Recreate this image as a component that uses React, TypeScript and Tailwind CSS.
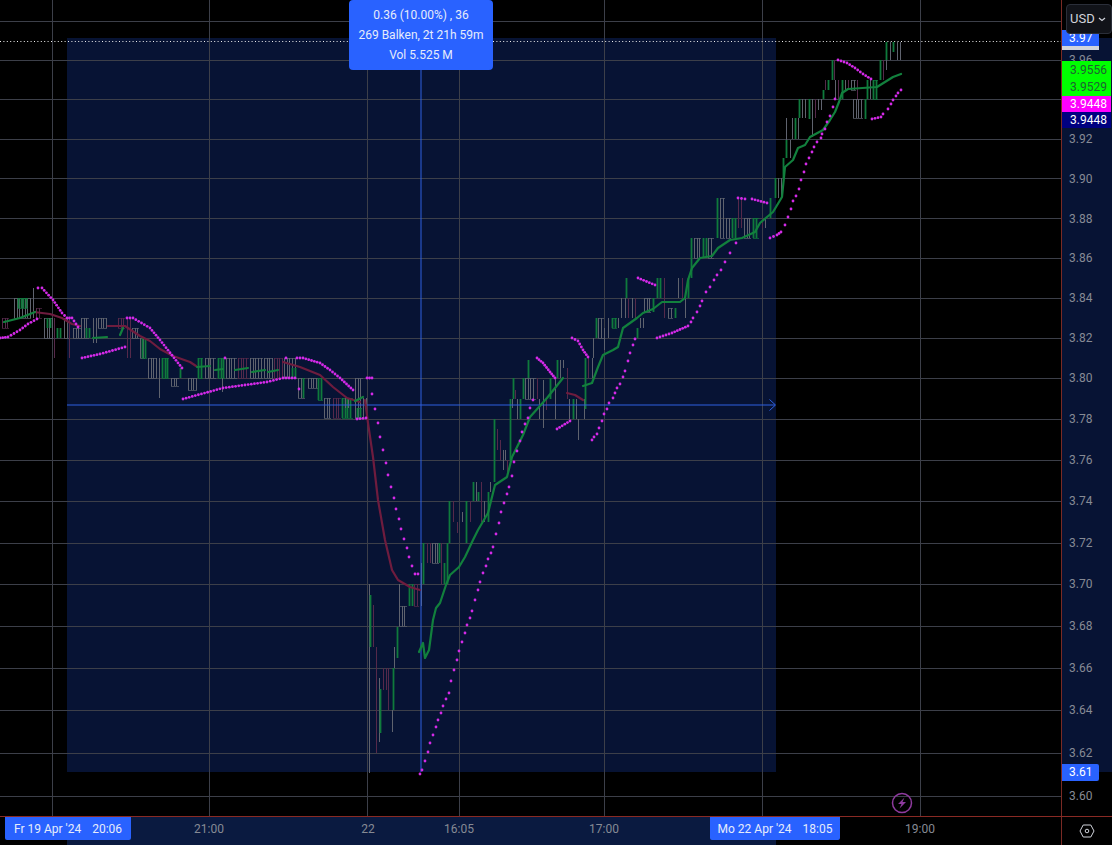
import { Fragment } from 'react';

type Pt = [number, number];
// x1, x2, top, bottom, colour (0 gray, 1 green, 2 red)
type Bar = [number, number, number, number, number];

const BAR_COLORS = ['#5f636e', '#0f7a3c', '#55294a'];

const hLines = [21, 60, 99, 139, 178, 218, 258, 298, 338, 378, 419, 460, 501, 543, 584, 626, 668, 710, 753, 796];
const vLines = [52, 209, 367, 459, 604, 762, 920];

const ticks = [
  { label: '3.96', y: 60 },
  { label: '3.92', y: 139 },
  { label: '3.90', y: 179 },
  { label: '3.88', y: 219 },
  { label: '3.86', y: 258 },
  { label: '3.84', y: 298 },
  { label: '3.82', y: 338 },
  { label: '3.80', y: 378 },
  { label: '3.78', y: 419 },
  { label: '3.76', y: 460 },
  { label: '3.74', y: 501 },
  { label: '3.72', y: 543 },
  { label: '3.70', y: 584 },
  { label: '3.68', y: 626 },
  { label: '3.66', y: 668 },
  { label: '3.64', y: 710 },
  { label: '3.62', y: 753 },
  { label: '3.60', y: 796 },
];

const timeTicks = [
  { label: '21:00', x: 209 },
  { label: '22', x: 368 },
  { label: '16:05', x: 459 },
  { label: '17:00', x: 604 },
  { label: '19:00', x: 920 },
];

const bars: Bar[] = [
  [2, 8, 318, 328, 2], [14, 30, 298, 318, 0], [18, 27, 298, 308, 1], [33, 33, 288, 318, 0], [36, 41, 308, 318, 2],
  [44, 52, 318, 338, 0], [47, 50, 318, 328, 1], [54, 55, 318, 358, 2], [57, 60, 328, 338, 1], [64, 68, 318, 338, 0],
  [69, 70, 318, 358, 2], [73, 80, 328, 338, 0], [81, 88, 318, 338, 0], [86, 89, 328, 338, 1], [93, 96, 318, 343, 0],
  [98, 106, 318, 328, 0], [118, 124, 318, 328, 2], [127, 130, 318, 358, 2], [132, 138, 328, 338, 0],
  [140, 144, 338, 358, 0], [142, 146, 338, 358, 1], [148, 156, 358, 378, 0], [159, 159, 358, 398, 0], [162, 168, 358, 378, 1],
  [171, 178, 378, 386, 0], [180, 182, 368, 378, 1], [188, 196, 378, 390, 0], [198, 202, 358, 378, 1], [205, 215, 358, 378, 0],
  [218, 224, 358, 378, 1], [226, 236, 358, 378, 0], [222, 222, 378, 392, 0], [238, 248, 358, 378, 2], [250, 262, 358, 378, 0],
  [264, 272, 358, 378, 0], [274, 282, 358, 378, 2], [284, 296, 358, 378, 0], [292, 295, 368, 378, 1],
  [298, 304, 378, 398, 0], [303, 305, 378, 398, 1], [308, 318, 378, 388, 0], [318, 322, 378, 400, 1],
  [324, 330, 398, 418, 0], [333, 340, 398, 418, 2], [342, 352, 398, 418, 1], [345, 348, 398, 408, 0], [355, 362, 378, 418, 0], [357, 361, 408, 418, 1],
  [363, 366, 398, 418, 0],
  [369, 371, 584, 773, 0], [370, 371, 595, 647, 1], [373, 374, 605, 647, 2], [376, 377, 647, 753, 2], [379, 379, 678, 742, 0], [380, 381, 689, 733, 1],
  [383, 386, 668, 690, 2], [388, 389, 668, 710, 2], [392, 392, 710, 732, 0], [393, 394, 668, 710, 1], [394, 394, 647, 668, 0],
  [397, 397, 627, 658, 1], [399, 406, 606, 626, 0], [399, 399, 584, 606, 0], [409, 412, 584, 606, 1], [414, 418, 584, 606, 2],
  [421, 421, 563, 606, 0], [423, 423, 543, 584, 1], [427, 430, 543, 563, 2], [432, 438, 543, 563, 0], [439, 441, 543, 563, 1],
  [441, 443, 543, 584, 2], [444, 445, 563, 584, 1], [447, 447, 543, 584, 1], [449, 449, 501, 543, 1],
  [453, 455, 501, 522, 2], [457, 458, 522, 533, 2], [462, 463, 512, 522, 0], [466, 466, 501, 543, 1], [470, 471, 501, 522, 2],
  [473, 473, 482, 501, 1], [476, 478, 482, 501, 0], [478, 479, 492, 501, 1], [481, 482, 482, 522, 2], [484, 486, 501, 522, 0],
  [488, 489, 492, 522, 1], [490, 491, 482, 492, 0], [494, 494, 419, 482, 1], [497, 498, 429, 450, 2], [500, 501, 440, 460, 2],
  [503, 503, 450, 470, 0], [505, 505, 450, 460, 0], [507, 508, 460, 473, 2], [510, 510, 399, 460, 1], [512, 512, 399, 408, 0], [513, 513, 378, 399, 1], [515, 515, 390, 399, 2],
  [517, 518, 399, 419, 0], [520, 520, 399, 419, 1], [523, 523, 378, 399, 1], [525, 535, 378, 399, 0], [528, 529, 360, 378, 1], [537, 538, 378, 399, 2],
  [539, 541, 399, 419, 0], [543, 543, 380, 428, 0], [546, 546, 399, 410, 2], [550, 550, 378, 399, 1], [555, 555, 378, 419, 0], [557, 557, 360, 378, 1], [560, 560, 360, 378, 0], [563, 563, 360, 368, 0],
  [567, 567, 368, 399, 2], [569, 571, 399, 419, 0], [573, 574, 399, 419, 1], [576, 576, 399, 419, 0], [578, 578, 419, 440, 0], [584, 584, 399, 419, 0],
  [585, 586, 358, 409, 1], [588, 588, 358, 378, 2], [592, 592, 358, 378, 0], [593, 593, 338, 358, 0], [596, 596, 318, 338, 1], [598, 603, 318, 338, 0],
  [604, 605, 328, 350, 0], [608, 610, 318, 338, 0], [612, 616, 318, 328, 1], [618, 620, 318, 328, 0], [621, 621, 298, 318, 0], [625, 625, 298, 318, 0], [626, 626, 278, 298, 1],
  [628, 629, 298, 318, 2], [632, 632, 298, 318, 0], [635, 635, 298, 318, 2], [637, 638, 328, 338, 1], [640, 643, 318, 328, 0],
  [644, 650, 298, 312, 0], [653, 654, 298, 312, 1], [657, 657, 278, 298, 1], [660, 660, 278, 298, 1], [664, 665, 278, 318, 2], [668, 672, 308, 318, 0], [675, 676, 308, 318, 1],
  [678, 678, 278, 298, 0], [682, 682, 278, 298, 2], [685, 685, 298, 318, 0], [688, 689, 278, 298, 1],
  [691, 691, 238, 278, 1], [694, 700, 238, 258, 0], [703, 706, 238, 258, 1], [708, 713, 238, 258, 0], [717, 717, 198, 238, 1], [720, 724, 198, 238, 0],
  [726, 730, 218, 238, 0], [732, 735, 218, 238, 1], [738, 741, 198, 228, 2], [744, 750, 218, 238, 0], [753, 758, 218, 238, 1], [762, 762, 218, 228, 2], [765, 765, 218, 228, 0],
  [770, 771, 198, 218, 1], [775, 775, 178, 198, 1], [778, 781, 178, 198, 0], [783, 783, 158, 178, 1], [786, 786, 118, 140, 0], [786, 787, 140, 158, 1], [790, 790, 140, 158, 0],
  [792, 792, 118, 139, 0], [795, 795, 118, 139, 1], [798, 798, 118, 139, 0], [799, 799, 99, 118, 1], [802, 805, 99, 118, 0], [809, 809, 99, 119, 1], [812, 812, 99, 137, 0],
  [815, 815, 99, 118, 2], [818, 821, 99, 110, 0], [823, 823, 90, 99, 1], [825, 825, 80, 90, 2], [828, 828, 80, 90, 1], [832, 832, 60, 80, 1], [834, 834, 60, 80, 2],
  [835, 835, 80, 99, 0], [838, 838, 80, 99, 2], [842, 842, 80, 99, 1], [845, 845, 80, 90, 0], [848, 848, 80, 90, 2], [851, 855, 80, 90, 0], [857, 857, 80, 99, 2],
  [853, 862, 99, 118, 0], [865, 865, 99, 119, 1], [867, 867, 80, 99, 1], [870, 870, 80, 99, 0], [873, 877, 80, 99, 1], [880, 880, 60, 80, 1], [883, 883, 60, 80, 2],
  [886, 886, 42, 60, 1], [886, 887, 60, 70, 0], [890, 890, 42, 60, 0], [893, 894, 42, 52, 1], [897, 900, 42, 60, 0],
];

const redMa: Pt[][] = [
  [[34, 312], [50, 314], [62, 318], [72, 324], [80, 326]],
  [[108, 326], [125, 326], [140, 336], [150, 341], [160, 349], [173, 356], [190, 362], [196, 366]],
  [[283, 362], [300, 367], [320, 375], [333, 387], [347, 398], [360, 402]],
  [[365, 400], [368, 423], [373, 457], [378, 500], [385, 540], [392, 570], [398, 580], [410, 587], [420, 590]],
  [[567, 393], [575, 395], [583, 400]],
];

const greenMa: Pt[][] = [
  [[4, 322], [20, 318], [35, 312]],
  [[93, 338], [107, 337]],
  [[120, 335], [123, 328]],
  [[197, 367], [210, 366]],
  [[215, 370], [223, 369]],
  [[235, 370], [248, 368]],
  [[252, 372], [265, 370]],
  [[268, 372], [278, 370]],
  [[355, 401], [363, 397]],
  [[419, 652], [423, 643], [425, 658], [429, 650], [433, 620], [436, 608], [440, 603], [446, 585], [450, 575], [459, 567], [465, 557], [473, 540], [478, 530], [488, 513], [495, 485], [507, 477], [512, 457], [523, 435], [530, 417], [547, 398], [563, 378]],
  [[583, 386], [592, 383], [598, 367], [603, 355], [613, 350], [618, 347], [623, 328], [637, 318], [643, 313], [653, 309], [662, 302], [680, 302], [685, 298], [688, 280], [692, 268], [700, 258], [712, 256], [718, 248], [730, 240], [742, 238], [755, 232], [760, 223], [767, 217], [773, 212], [782, 197], [785, 167], [793, 160], [798, 148], [805, 145], [810, 137], [823, 130], [830, 120], [835, 112], [839, 102], [842, 93], [848, 89], [877, 87], [893, 77], [901, 74]],
];

// dense runs of the stop-and-reverse dots
const denseDots: Pt[][] = [
  [[0, 338], [8, 337], [20, 330], [28, 324], [37, 319]],
  [[38, 288], [42, 288], [53, 300], [62, 313], [67, 318], [72, 318], [78, 327]],
  [[82, 358], [100, 354], [125, 347]],
  [[127, 318], [133, 318], [150, 328], [160, 340], [182, 368]],
  [[183, 399], [223, 388], [267, 382], [283, 378], [295, 378]],
  [[297, 358], [303, 358], [320, 363], [330, 370], [340, 378], [353, 390]],
  [[357, 419], [366, 418]],
  [[367, 378], [372, 378]],
  [[537, 358], [543, 363], [550, 372], [555, 378]],
  [[557, 429], [570, 421]],
  [[572, 338], [578, 341], [583, 350], [588, 357]],
  [[638, 278], [655, 285]],
  [[657, 338], [672, 333], [688, 326]],
  [[738, 198], [745, 199]],
  [[752, 199], [767, 203]],
  [[770, 238], [777, 235], [781, 232]],
  [[838, 60], [847, 63], [855, 68], [863, 74], [871, 79]],
  [[872, 119], [881, 117]],
];

const sparseDots: Pt[] = [
  [225, 358], [286, 358], [299, 389],
  [372, 394], [375, 409], [378, 423], [380, 437], [383, 450], [386, 463], [388, 475], [391, 487], [394, 498], [396, 509], [399, 519], [401, 529], [404, 539], [407, 548], [409, 557], [412, 566], [415, 574], [418, 574],
  [420, 774], [422, 770], [425, 761], [428, 752], [430, 743], [433, 735], [436, 727], [438, 720], [441, 713], [443, 706], [446, 699], [449, 693], [451, 681], [454, 670], [457, 660], [459, 651], [462, 642], [465, 633], [467, 625], [470, 618], [472, 611], [475, 600], [478, 590], [480, 582], [483, 573], [486, 566], [488, 559], [491, 553], [493, 547], [496, 534], [499, 523], [501, 512], [504, 503], [507, 494], [509, 487], [512, 476], [514, 462], [517, 451], [520, 441], [522, 432], [525, 424], [528, 418], [530, 408], [533, 400],
  [592, 440], [594, 437], [597, 434], [599, 428], [602, 421], [604, 414], [607, 409], [609, 403], [613, 398], [615, 393], [617, 388], [620, 384], [623, 377], [625, 371], [628, 361], [630, 353], [633, 345], [635, 339],
  [691, 322], [693, 318], [697, 312], [700, 306], [702, 301], [706, 292], [710, 287], [714, 280], [717, 275], [721, 270], [725, 262], [730, 253], [736, 243],
  [785, 225], [788, 217], [791, 209], [793, 201], [796, 196], [799, 189], [801, 180], [804, 172], [806, 164], [809, 158], [812, 152], [814, 147], [817, 142], [821, 138], [822, 134], [825, 129], [827, 122], [830, 116], [833, 107], [835, 99],
  [883, 114], [888, 109], [891, 104], [893, 100], [896, 96], [898, 93], [901, 90],
];

function spread(run: Pt[], step = 3.1): Pt[] {
  const out: Pt[] = [];
  for (let i = 0; i < run.length - 1; i++) {
    const [x1, y1] = run[i];
    const [x2, y2] = run[i + 1];
    const n = Math.max(1, Math.round(Math.hypot(x2 - x1, y2 - y1) / step));
    for (let k = 0; k < n; k++) out.push([x1 + ((x2 - x1) * k) / n, y1 + ((y2 - y1) * k) / n]);
  }
  out.push(run[run.length - 1]);
  return out;
}

const toPoints = (pts: Pt[]) => pts.map((p) => p.join(',')).join(' ');

function Chart() {
  const allDots = [...denseDots.flatMap((r) => spread(r)), ...sparseDots];
  return (
    <svg width={1061} height={816} className="block">
      <rect x={67} y={38} width={709} height={734} fill="#071334" />
      {hLines.map((y) => (
        <line key={y} x1={0} x2={1061} y1={y + 0.5} y2={y + 0.5} stroke="#3c3f49" />
      ))}
      {vLines.map((x) => (
        <line key={x} x1={x + 0.5} x2={x + 0.5} y1={0} y2={816} stroke="#3c3f49" />
      ))}
      <line x1={0} x2={1061} y1={41.5} y2={41.5} stroke="#f0f0f0" strokeDasharray="1 2.4" />

      {bars.map(([x1, x2, top, bottom, c], i) => {
        const xs: number[] = [];
        for (let x = x1; x <= x2; x += 2.64) xs.push(Math.round(x) + 0.5);
        const color = BAR_COLORS[c];
        return (
          <Fragment key={i}>
            {xs.map((x) => (
              <line key={x} x1={x} x2={x} y1={top} y2={bottom} stroke={color} strokeWidth={c === 1 ? 1.8 : 1} />
            ))}
            {x2 - x1 > 3 && <line x1={x1} x2={x2 + 1} y1={top + 0.5} y2={top + 0.5} stroke={color} opacity={0.7} />}
            {x2 - x1 > 3 && <line x1={x1} x2={x2 + 1} y1={bottom + 0.5} y2={bottom + 0.5} stroke={color} opacity={0.7} />}
          </Fragment>
        );
      })}

      <line x1={67} x2={775} y1={405} y2={405} stroke="#2e60e0" />
      <path d="M769.5 399.5 L775.5 405 L769.5 410.5" fill="none" stroke="#2e60e0" />
      <line x1={421} x2={421} y1={70} y2={772} stroke="#2e60e0" />

      {redMa.map((line, i) => (
        <polyline key={i} points={toPoints(line)} fill="none" stroke="#6e1c3e" strokeWidth={2.2} strokeLinejoin="round" strokeLinecap="round" />
      ))}
      {greenMa.map((line, i) => (
        <polyline key={i} points={toPoints(line)} fill="none" stroke="#12803d" strokeWidth={2.2} strokeLinejoin="round" strokeLinecap="round" />
      ))}
      {allDots.map(([x, y], i) => (
        <circle key={i} cx={x} cy={y} r={1.4} fill="#d42ae8" />
      ))}

      {/* flash badge */}
      <circle cx={902} cy={803} r={9.5} fill="none" stroke="#8e3a9e" strokeWidth={1.5} />
      <path d="M904.5 797.5 L898 804 L901.5 804 L899.5 808.5 L906 802 L902.5 802 Z" fill="#8e3a9e" />
    </svg>
  );
}

export default function App() {
  return (
    <div className="flex h-[845px] w-[1112px] flex-col overflow-hidden bg-black font-['Roboto',sans-serif] text-[12px]">
      <div className="flex h-[816px]">
        <div className="relative w-[1061px]">
          <Chart />
          <div className="absolute left-[349px] top-0 flex h-[70px] w-[144px] flex-col items-center justify-center rounded-[4px] bg-[#2962ff] leading-[20px] text-[#e6ecfb]">
            <div>0.36 (10.00%) , 36</div>
            <div>269 Balken, 2t 21h 59m</div>
            <div>Vol 5.525 M</div>
          </div>
        </div>

        <div className="relative w-[51px] border-l border-[#7a2a24] text-[#868a94]">
          <div className="absolute inset-x-0 top-[38px] h-[734px] bg-[#071334]" />
          {ticks.map((t) => (
            <div key={t.label} className="absolute left-[7px] leading-[14px]" style={{ top: t.y - 7 }}>
              {t.label}
            </div>
          ))}

          {/* last price tags */}
          <div className="absolute left-0 top-[30px] h-[16px] w-[37px] bg-[#2962ff] pl-[7px] leading-[16px] text-white">3.97</div>
          <div className="absolute left-0 top-[46px] h-[4px] w-[37px] bg-[#d1d4dc]" />
          <div className="absolute left-0 top-[61px] flex h-[35px] w-[49px] flex-col bg-[#00ff00] pl-[8px] text-[#1f5f33]">
            <div className="leading-[18px]">3.9556</div>
            <div className="leading-[17px]">3.9529</div>
          </div>
          <div className="absolute left-0 top-[96px] h-[16px] w-[49px] bg-[#ff00ff] pl-[8px] leading-[16px] text-white">3.9448</div>
          <div className="absolute left-0 top-[112px] h-[16px] w-[49px] bg-[#000080] pl-[8px] leading-[16px] text-white">3.9448</div>
          <div className="absolute left-0 top-[764px] h-[17px] w-[37px] rounded-r-[2px] bg-[#2962ff] pl-[7px] leading-[17px] text-white">3.61</div>

          <div className="absolute left-[4px] top-[4px] flex h-[30px] w-[46px] items-center justify-between rounded-[4px] border border-[#2a2e39] bg-[#111319] pl-[3px] pr-[5px] text-[13px] text-[#d1d4dc]">
            <span>USD</span>
            <svg width="8" height="5" viewBox="0 0 8 5" fill="none" stroke="#d1d4dc" strokeWidth="1.2">
              <path d="M1 1l3 2.5L7 1" />
            </svg>
          </div>
        </div>
      </div>

      <div className="flex h-[29px] border-t border-[#8a2a24]">
        <div className="relative w-[1061px] text-[#868a94]">
          <div className="absolute bottom-0 left-[67px] top-0 w-[709px] bg-[#0a1a40]" />
          {timeTicks.map((t) => (
            <div key={t.label} className="absolute top-[5px] -translate-x-1/2 leading-[14px]" style={{ left: t.x }}>
              {t.label}
            </div>
          ))}
          <div className="absolute left-[5px] top-0 flex h-[23px] w-[126px] items-center justify-center gap-[11px] rounded-b-[2px] bg-[#2962ff] text-[#e6ecfb]">
            <span>Fr 19 Apr '24</span>
            <span>20:06</span>
          </div>
          <div className="absolute left-[710px] top-0 flex h-[23px] w-[130px] items-center justify-center gap-[11px] rounded-b-[2px] bg-[#2962ff] text-[#e6ecfb]">
            <span>Mo 22 Apr '24</span>
            <span>18:05</span>
          </div>
        </div>
        <div className="flex w-[51px] items-center justify-center border-l border-[#7a2a24]">
          <svg width="16" height="14" viewBox="0 0 16 14" fill="none" stroke="#d1d4dc" strokeWidth="1">
            <path d="M4.2 1h7.6L15 7l-3.2 6H4.2L1 7z" />
            <circle cx="8" cy="7" r="1.8" />
          </svg>
        </div>
      </div>
    </div>
  );
}
